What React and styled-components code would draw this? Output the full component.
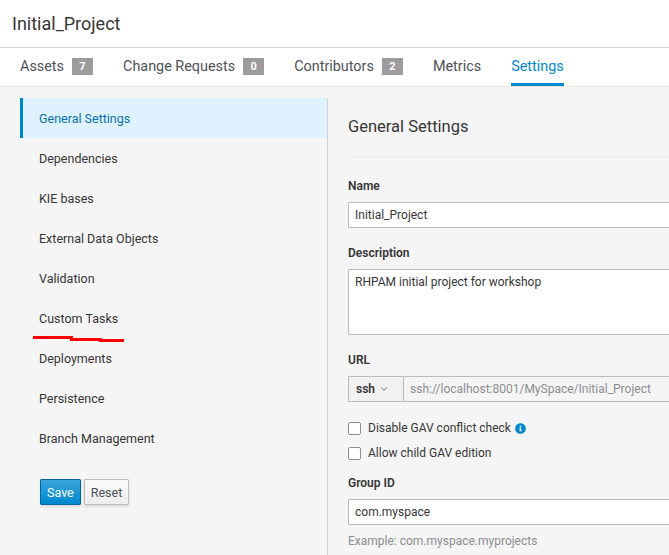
import React from 'react';
import styled, { createGlobalStyle } from 'styled-components';
import { FaInfoCircle } from 'react-icons/fa';
import { ChevronDown } from 'lucide-react';

// DATA

const tabs = [
  { label: 'Assets', count: 7 },
  { label: 'Change Requests', count: 0 },
  { label: 'Contributors', count: 2 },
  { label: 'Metrics' },
  { label: 'Settings', active: true },
];

const sections = [
  'General Settings',
  'Dependencies',
  'KIE bases',
  'External Data Objects',
  'Validation',
  'Custom Tasks',
  'Deployments',
  'Persistence',
  'Branch Management',
];

// COMPONENT

const App = () => {
  return (
    <>
      <GlobalStyle />
      <Page>
        <TitleBar>Initial_Project</TitleBar>
        <TabBar>
          {tabs.map((tab) => (
            <Tab key={tab.label} $active={tab.active}>
              {tab.label}
              {tab.count !== undefined && <Badge>{tab.count}</Badge>}
            </Tab>
          ))}
        </TabBar>
        <Body>
          <Sidebar>
            {sections.map((section, i) => (
              <NavItem key={section} $active={i === 0}>
                {section}
              </NavItem>
            ))}
            <ButtonRow>
              <Button $primary>Save</Button>
              <Button>Reset</Button>
            </ButtonRow>
            <Scribble width="96" height="10" viewBox="0 0 96 10">
              <rect x="0" y="0" width="40" height="3" fill="#ff0000" />
              <rect x="37" y="2" width="32" height="3" fill="#ff0000" />
              <rect x="66" y="3" width="25" height="3" fill="#ff0000" />
            </Scribble>
          </Sidebar>
          <Main>
            <PageHeading>General Settings</PageHeading>
            <Form>
              <Label>Name</Label>
              <TextInput value="Initial_Project" readOnly />

              <Label $top={17}>Description</Label>
              <TextArea value="RHPAM initial project for workshop" readOnly />

              <Label $top={17}>URL</Label>
              <InputGroup>
                <Protocol>
                  ssh <ChevronDown size={10} strokeWidth={1.6} />
                </Protocol>
                <TextInput
                  $disabled
                  value="ssh://localhost:8001/MySpace/Initial_Project"
                  readOnly
                />
              </InputGroup>

              <CheckList>
                <CheckRow>
                  <Check type="checkbox" />
                  Disable GAV conflict check
                  <FaInfoCircle size={11} color="#0088ce" />
                </CheckRow>
                <CheckRow>
                  <Check type="checkbox" />
                  Allow child GAV edition
                </CheckRow>
              </CheckList>

              <Label $top={12}>Group ID</Label>
              <TextInput value="com.myspace" readOnly />
              <HelpText>Example: com.myspace.myprojects</HelpText>
            </Form>
          </Main>
        </Body>
      </Page>
    </>
  );
};

// STYLES

const GlobalStyle = createGlobalStyle`
  html, body {
    margin: 0;
    padding: 0;
    overflow: hidden;
  }
  body {
    font-family: Roboto, "Liberation Sans", sans-serif;
    color: #363636;
    background: #fff;
  }
`;

const Page = styled.div`
  width: 669px;
  height: 555px;
  display: flex;
  flex-direction: column;
  overflow: hidden;
`;

const TitleBar = styled.div`
  height: 47px;
  border-bottom: 1px solid #d1d1d1;
  display: flex;
  align-items: center;
  padding-left: 12px;
  font-size: 18px;
  color: #363636;
`;

const TabBar = styled.nav`
  height: 38px;
  display: flex;
  padding-left: 5px;
  border-bottom: 1px solid #e7e7e7;
`;

const Tab = styled.div`
  margin: 0 15px;
  padding-top: 1px;
  display: flex;
  align-items: center;
  gap: 8px;
  font-size: 14.4px;
  color: ${(p) => (p.$active ? '#0088ce' : '#4d5258')};
  border-bottom: 3px solid ${(p) => (p.$active ? '#0088ce' : 'transparent')};
`;

const Badge = styled.span`
  display: inline-flex;
  align-items: center;
  justify-content: center;
  width: 21px;
  height: 17px;
  background: #9c9c9c;
  color: #fff;
  font-size: 11px;
  font-weight: 700;
`;

const Body = styled.div`
  flex: 1;
  display: flex;
  background: #f5f5f5;
  padding-top: 11px;
  min-height: 0;
`;

const Sidebar = styled.aside`
  position: relative;
  width: 307px;
  margin-left: 20px;
  border-right: 1px solid #d1d1d1;
  flex-shrink: 0;
`;

const NavItem = styled.div`
  height: 40px;
  display: flex;
  align-items: center;
  padding-left: 16px;
  border-left: 3px solid ${(p) => (p.$active ? '#0088ce' : 'transparent')};
  background: ${(p) => (p.$active ? '#def3ff' : 'transparent')};
  color: ${(p) => (p.$active ? '#0a6fa8' : '#363636')};
  font-size: 12.5px;
`;

const ButtonRow = styled.div`
  display: flex;
  gap: 3px;
  margin-top: 21px;
  padding-left: 20px;
`;

const Button = styled.button`
  height: 26px;
  padding: 0 6px;
  font-family: inherit;
  font-size: 12.5px;
  border-radius: 1px;
  border: 1px solid ${(p) => (p.$primary ? '#00659c' : '#bbb')};
  color: ${(p) => (p.$primary ? '#fff' : '#4d5258')};
  background: ${(p) =>
    p.$primary
      ? 'linear-gradient(#39a5dc, #0088ce)'
      : 'linear-gradient(#fafafa, #ededed)'};
  box-shadow: 0 2px 3px rgba(3, 3, 3, 0.1);
`;

const Scribble = styled.svg`
  position: absolute;
  left: 13px;
  top: 238px;
`;

const Main = styled.main`
  flex: 1;
  min-width: 0;
  padding-left: 20px;
  overflow: hidden;
`;

const PageHeading = styled.h1`
  margin: 0;
  padding: 19px 0 19px;
  line-height: 20px;
  font-size: 16.5px;
  font-weight: 400;
  color: #363636;
  border-bottom: 1px solid #ebebeb;
  width: 400px;
`;

const Form = styled.div`
  width: 400px;
  display: flex;
  flex-direction: column;
  padding-top: 21px;
`;

const Label = styled.label`
  font-size: 12px;
  font-weight: 600;
  line-height: 16px;
  margin: ${(p) => p.$top || 0}px 0 8px;
`;

const TextInput = styled.input`
  box-sizing: border-box;
  flex: none;
  width: 100%;
  height: 26px;
  padding: 0 6px;
  border: 1px solid #bbb;
  border-radius: 1px;
  font-family: inherit;
  font-size: 12px;
  color: ${(p) => (p.$disabled ? '#8b8d8f' : '#363636')};
  background: ${(p) => (p.$disabled ? '#f5f5f5' : '#fff')};
  outline: none;
`;

const TextArea = styled.textarea`
  box-sizing: border-box;
  width: 100%;
  height: 66px;
  padding: 5px 6px;
  border: 1px solid #bbb;
  border-radius: 1px;
  font-family: inherit;
  font-size: 12px;
  color: #363636;
  resize: none;
  outline: none;
`;

const InputGroup = styled.div`
  display: flex;
  height: 26px;

  input {
    flex: 1;
    width: auto;
    min-width: 0;
  }
`;

const Protocol = styled.div`
  box-sizing: border-box;
  width: 55px;
  display: flex;
  align-items: center;
  gap: 4px;
  padding-left: 7px;
  border: 1px solid #bbb;
  border-right: none;
  background: #f1f1f1;
  font-size: 12px;
  font-weight: 600;
  color: #363636;
`;

const CheckList = styled.div`
  display: flex;
  flex-direction: column;
  gap: 5px;
  margin-top: 16px;
`;

const CheckRow = styled.label`
  height: 20px;
  display: flex;
  align-items: center;
  gap: 7px;
  font-size: 12px;
  color: #363636;

  svg {
    margin-left: -3px;
  }
`;

const Check = styled.input`
  appearance: none;
  margin: 0;
  width: 13px;
  height: 13px;
  border: 1px solid #8b8d8f;
  border-radius: 2px;
  background: #fff;
`;

const HelpText = styled.div`
  margin-top: 8px;
  font-size: 12px;
  line-height: 16px;
  color: #8b8d8f;
`;

// EXPORT

export default App;
